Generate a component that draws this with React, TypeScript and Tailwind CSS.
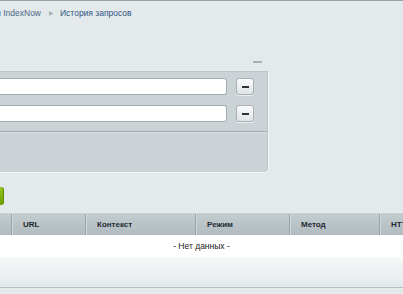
import React from 'react';

const COLUMNS = [
  { label: '', w: 'w-[11px]' },
  { label: 'URL', w: 'w-[74px]' },
  { label: 'Контекст', w: 'w-[110px]' },
  { label: 'Режим', w: 'w-[94px]' },
  { label: 'Метод', w: 'w-[90px]' },
  { label: 'HTTP код', w: 'w-[60px]' },
];

const MinusButton: React.FC = () => (
  <button className="ml-[9px] w-[18px] h-[17px] flex items-center justify-center rounded-[3px] border border-[#a9b1b5] bg-gradient-to-b from-[#fbfbfc] to-[#dfe3e5] shadow-[0_1px_0_rgba(255,255,255,0.6)]">
    <span className="block w-[7px] h-[2px] bg-[#2c3236]" />
  </button>
);

const FieldRow: React.FC = () => (
  <div className="flex items-center">
    <input
      type="text"
      className="w-[227px] h-[17px] bg-white border border-[#a3acb0] rounded-r-[3px] border-l-0 outline-none"
    />
    <MinusButton />
  </div>
);

export default function App() {
  return (
    <div className="w-[403px] h-[294px] overflow-hidden bg-[#e4eaec] border-t border-[#9ba5a9] font-['Liberation_Sans',Arial,sans-serif] text-[8px]">
      {/* Breadcrumbs */}
      <div className="flex items-center h-[23px] pt-[1px] text-[8.5px]">
        <div className="w-[41px] flex justify-end whitespace-nowrap overflow-hidden">
          <span className="text-[#4a6787]">Интеграция IndexNow</span>
        </div>
        <span className="ml-[8px] text-[#a9b2b6] text-[6px]">▶</span>
        <span className="ml-[6px] text-[#2f5480]">История запросов</span>
      </div>

      {/* Collapse dash */}
      <div className="w-[262px] flex justify-end mt-[37px]">
        <span className="block w-[9px] h-[2px] bg-[#a9b1b5]" />
      </div>

      {/* Filter panel */}
      <div className="mt-[8px] w-[268px] h-[101px] bg-[#cbd3d7] border-t border-[#bac3c7] border-r border-r-[#bcc4c8] rounded-br-[4px] shadow-[1px_1px_0_#f2f5f6]">
        <div className="pt-[6px] flex flex-col gap-[10px]">
          <FieldRow />
          <FieldRow />
        </div>
        <div className="mt-[9px] h-[1px] bg-[#9fa8ad]" />
        <div className="h-[1px] bg-[#dbe1e4]" />
      </div>

      {/* Submit button edge */}
      <div className="mt-[15px] w-[4px] h-[18px] rounded-r-[3px] bg-gradient-to-b from-[#94c61a] to-[#6f9d00] border-r border-[#5f8a00]" />

      {/* Table */}
      <div className="mt-[8px]">
        <div className="flex h-[22px] bg-gradient-to-b from-[#c3cccf] to-[#b0bbc0] border-t border-[#c9d1d4]">
          {COLUMNS.map((c, i) => (
            <div
              key={i}
              className={`${c.w} shrink-0 flex items-center pl-[11px] font-bold text-[#1f2a30] whitespace-nowrap ${i < COLUMNS.length - 1 ? 'border-r border-[#97a3a9] shadow-[1px_0_0_#d3dadd]' : ''}`}
            >
              {c.label}
            </div>
          ))}
        </div>
        <div className="h-[22px] bg-white flex items-center">
          <div className="w-[414px] flex justify-center text-[8.5px] text-[#1a1a1a]">- Нет данных -</div>
        </div>
        <div className="h-[31px] bg-gradient-to-b from-[#f7f9f9] to-[#e3e9eb] border-b border-[#b6bfc3]" />
      </div>
    </div>
  );
}
